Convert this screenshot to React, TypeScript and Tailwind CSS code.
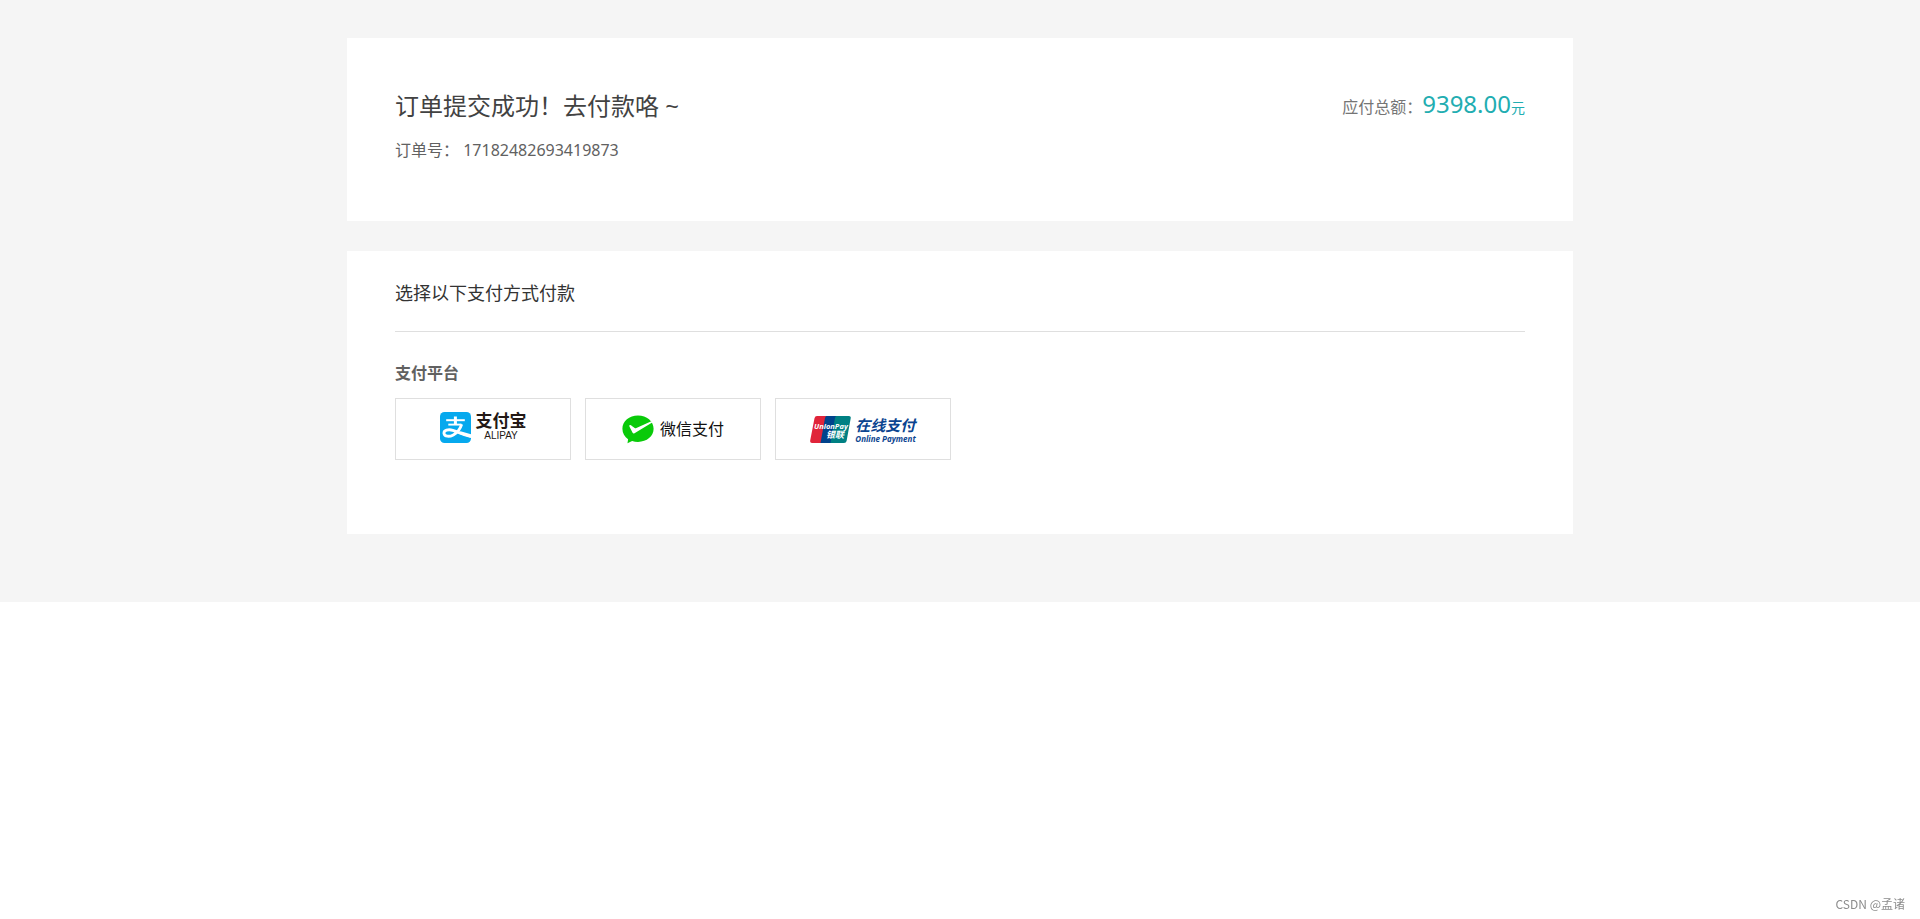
import type { ReactNode } from "react";

const order = { id: "17182482693419873", total: "9398.00" };

function AlipayLogo() {
  return (
    <span className="flex items-center gap-[5px] pb-1">
      <svg viewBox="0 0 31 31" className="size-[31px]" aria-hidden="true">
        <rect width="31" height="31" rx="4.500" fill="#06a9ee" />
        <g fill="none" stroke="#fff" strokeLinecap="butt">
          <path d="M15.400 4.500v7.600" strokeWidth="3" />
          <path d="M6.200 8.200h18.600" strokeWidth="2" />
          <path d="M8.300 12.600h13.200" strokeWidth="1.900" />
          <path
            d="M21.700 12.200c-1.600 5-4.600 8.600-8.400 10.700-3.800 2-8.800 2-9.300-1.400-.5-3.200 4.300-4.600 8.800-3.200 5.200 1.500 10 5 18.200 6.200"
            strokeWidth="2.800"
          />
        </g>
        <path d="M20.500 19.300 31 22.200v3.600l-12.500-4z" fill="#fff" />
      </svg>
      <span className="flex flex-col items-center pb-px text-[#231815]">
        <span className="text-[17px] leading-[18px] font-bold">支付宝</span>
        <span className="font-['Liberation_Sans','Noto_Sans_CJK_SC',sans-serif] text-[10px] leading-3">
          ALIPAY
        </span>
      </span>
    </span>
  );
}

function WechatLogo() {
  return (
    <span className="flex items-center gap-[6px]">
      <svg viewBox="0 0 32 29" className="h-[29px] w-8" aria-hidden="true">
        <path
          d="M16 .5C7.200.5.400 6.400.400 13.800c0 4.400 2.300 8 5.700 10.400L5.500 28.300l4.600-2.400c1.900.7 3.800 1 5.900 1 8.800 0 15.600-5.700 15.600-13.100S24.800.5 16 .5z"
          fill="#09ca09"
        />
        <path
          d="M7.400 10.300c.9-.5 1.800.1 2.500.7l2.800 2.100c.6.300 1.100.2 1.700-.1L29.300 6.200l.9 1.200L12.500 18.300c-.8.500-1.500.3-1.900-.5L7.400 11.600z"
          fill="#fff"
        />
      </svg>
      <span className="text-base text-[#111]">微信支付</span>
    </span>
  );
}

function UnionPayLogo() {
  return (
    <span className="flex items-center gap-1 pt-px">
      <svg viewBox="0 0 41 27" className="h-[27px] w-[41px]" aria-hidden="true">
        <path d="M7 0h11l-5 27H2Q-.3 27 .2 24.500L4.500 2.200Q5 0 7 0z" fill="#e0243a" />
        <path d="M16.500 0H28l-5.500 27H10.500L15 2Q15.500 0 16.500 0z" fill="#00438c" />
        <path d="M26.500 0H39q2.200 0 1.700 2.300L36.600 25q-.4 2-2.600 2H20.500L25 2q.4-2 1.500-2z" fill="#008083" />
        <g
          fill="#fff"
          fontFamily="'Open Sans', 'Noto Sans CJK SC', sans-serif"
          fontWeight="700"
          fontStyle="italic"
        >
          <text x="4" y="13" fontSize="7.500">UnionPay</text>
          <text x="16" y="22" fontSize="9">银联</text>
        </g>
      </svg>
      <span className="flex flex-col items-start text-[#0b4490] italic">
        <span className="text-[15px] leading-[17px] font-bold">在线支付</span>
        <span className="font-['Open_Sans','Noto_Sans_CJK_SC',sans-serif] text-[8px] leading-[9px] font-bold">
          Online Payment
        </span>
      </span>
    </span>
  );
}

function PayOption({ label, children }: { label: string; children: ReactNode }) {
  return (
    <button
      type="button"
      aria-label={label}
      className="flex h-[62px] w-44 cursor-pointer items-center justify-center border border-[#dfdfdf] bg-white"
    >
      {children}
    </button>
  );
}

export default function App() {
  return (
    <div className="min-h-screen bg-white font-['Noto_Sans','Noto_Sans_CJK_SC',sans-serif] text-base leading-6 text-[#616161]">
      <main className="bg-[#f5f5f5] px-4 pt-[38px] pb-[68px]">
        <div className="mx-auto flex max-w-[1226px] flex-col gap-[30px]">
          <section className="flex items-start justify-between bg-white px-12 pt-[50px] pb-[59px]">
            <div>
              <h1 className="text-2xl leading-9 text-[#424242]">订单提交成功！去付款咯 ~</h1>
              <p className="mt-[14px]">订单号： {order.id}</p>
            </div>
            <p className="leading-8">
              <span className="text-[#757575]">应付总额：</span>
              <span className="text-[#22adb1]">
                <span className="text-2xl leading-8">{order.total}</span>
                <span className="text-sm leading-8">元</span>
              </span>
            </p>
          </section>

          <section className="bg-white px-12 pt-[29px] pb-[74px]">
            <h2 className="border-b border-[#dfdfdf] pb-6 text-lg leading-[27px] text-[#333]">
              选择以下支付方式付款
            </h2>
            <h3 className="mt-[29px] font-bold">支付平台</h3>
            <div className="mt-[13px] flex flex-wrap gap-[14px]">
              <PayOption label="支付宝 ALIPAY">
                <AlipayLogo />
              </PayOption>
              <PayOption label="微信支付">
                <WechatLogo />
              </PayOption>
              <PayOption label="UnionPay 银联 在线支付 Online Payment">
                <UnionPayLogo />
              </PayOption>
            </div>
          </section>
        </div>
      </main>
      <footer className="fixed right-[15px] bottom-[6px] font-['Noto_Sans_CJK_SC',sans-serif] text-xs leading-[18px] text-[#8c8c8c]">
        CSDN @孟诸
      </footer>
    </div>
  );
}
